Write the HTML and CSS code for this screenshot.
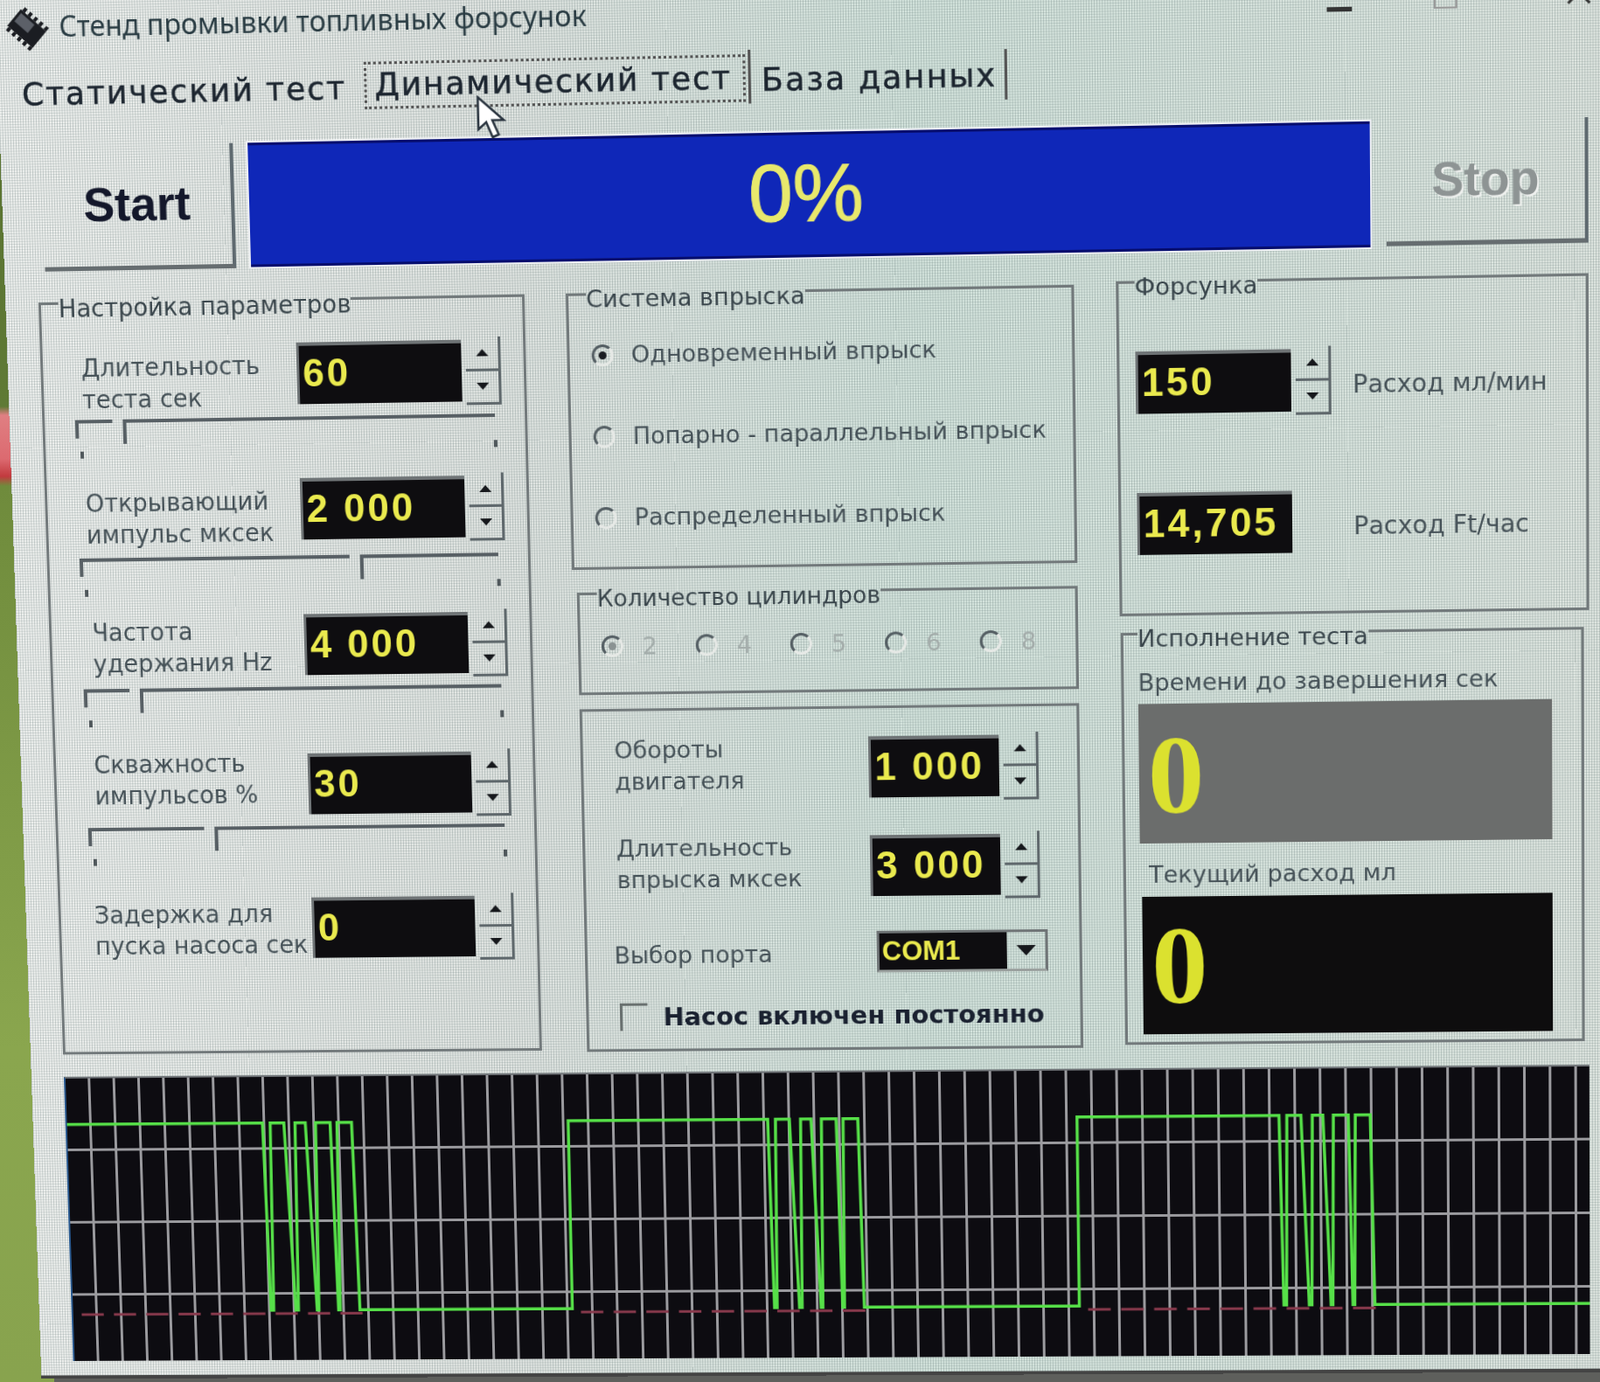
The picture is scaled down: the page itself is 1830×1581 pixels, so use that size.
FILE: index.html
```html
<!DOCTYPE html>
<html lang="ru">
<head>
  <meta charset="UTF-8" />
  <title>Стенд промывки топливных форсунок</title>
  <link rel="stylesheet" href="styles.css">
</head>
<body>

<div class="window">

  <div class="titlebar">
    <svg class="chip" width="54" height="54" viewBox="0 0 54 54">
      <g transform="rotate(42 27 27)">
        <rect x="8" y="15" width="38" height="24" fill="#1b1d22"/>
        <rect x="11" y="18" width="20" height="12" fill="#5c6068"/>
        <path d="M12 15V10M20 15V10M28 15V10M36 15V10M44 15V10M12 39v5M20 39v5M28 39v5M36 39v5M44 39v5" stroke="#1b1d22" stroke-width="4"/>
      </g>
    </svg>
    <span class="title-text">Стенд промывки топливных форсунок</span>
    <div class="win-btns">
      <span class="win-min"></span>
      <span class="win-max"></span>
      <svg class="win-close" width="30" height="30" viewBox="0 0 30 30"><path d="M3 3L27 27M27 3L3 27" stroke="#333" stroke-width="3"/></svg>
    </div>
  </div>

  <div class="tabs">
    <div class="tab tab-first">Статический тест</div>
    <div class="tab tab-active"><span class="tab-focus">Динамический тест</span></div>
    <div class="tab tab-last">База данных</div>
  </div>

  <div class="toolbar">
    <div class="btn btn-start">Start</div>
    <div class="progress">0%</div>
    <div class="btn btn-stop">Stop</div>
  </div>

  <div class="panels">

    <fieldset class="group group-params">
      <legend>Настройка параметров</legend>
      <div class="params">
        <div class="param">
          <div class="param-row">
            <div class="label label-param">Длительность<br>теста сек</div>
            <div class="lcd lcd-param">60</div>
            <div class="spin"><div class="spin-up"><i class="arrow-up"></i></div><div class="spin-down"><i class="arrow-down"></i></div></div>
          </div>
          <div class="slider slider-high"><span class="track-left" style="width: 9%"></span><span class="track-right"></span><i class="tick-l"></i><i class="tick-r"></i></div>
        </div>
        <div class="param">
          <div class="param-row">
            <div class="label label-param">Открывающий<br>импульс мксек</div>
            <div class="lcd lcd-param">2 000</div>
            <div class="spin"><div class="spin-up"><i class="arrow-up"></i></div><div class="spin-down"><i class="arrow-down"></i></div></div>
          </div>
          <div class="slider"><span class="track-left" style="width: 64.6%"></span><span class="track-right"></span><i class="tick-l"></i><i class="tick-r"></i></div>
        </div>
        <div class="param">
          <div class="param-row">
            <div class="label label-param label-freq">Частота<br>удержания Hz</div>
            <div class="lcd lcd-param">4 000</div>
            <div class="spin"><div class="spin-up"><i class="arrow-up"></i></div><div class="spin-down"><i class="arrow-down"></i></div></div>
          </div>
          <div class="slider"><span class="track-left" style="width: 11%"></span><span class="track-right"></span><i class="tick-l"></i><i class="tick-r"></i></div>
        </div>
        <div class="param">
          <div class="param-row">
            <div class="label label-param label-duty">Скважность<br>импульсов %</div>
            <div class="lcd lcd-param">30</div>
            <div class="spin"><div class="spin-up"><i class="arrow-up"></i></div><div class="spin-down"><i class="arrow-down"></i></div></div>
          </div>
          <div class="slider"><span class="track-left" style="width: 28%"></span><span class="track-right"></span><i class="tick-l"></i><i class="tick-r"></i></div>
        </div>
        <div class="param">
          <div class="param-row">
            <div class="label label-param label-delay">Задержка для<br>пуска насоса сек</div>
            <div class="lcd lcd-param">0</div>
            <div class="spin"><div class="spin-up"><i class="arrow-up"></i></div><div class="spin-down"><i class="arrow-down"></i></div></div>
          </div>
        </div>
      </div>
    </fieldset>

    <div class="column">
      <fieldset class="group group-system">
        <legend>Система впрыска</legend>
        <div class="radio-list">
          <div class="radio-row"><span class="radio radio-on"></span><span class="label">Одновременный впрыск</span></div>
          <div class="radio-row"><span class="radio"></span><span class="label">Попарно - параллельный впрыск</span></div>
          <div class="radio-row"><span class="radio"></span><span class="label">Распределенный впрыск</span></div>
        </div>
      </fieldset>

      <fieldset class="group group-cyl">
        <legend>Количество цилиндров</legend>
        <div class="cyl-row">
          <div class="cyl"><span class="radio radio-on"></span><span>2</span></div>
          <div class="cyl"><span class="radio"></span><span>4</span></div>
          <div class="cyl"><span class="radio"></span><span>5</span></div>
          <div class="cyl"><span class="radio"></span><span>6</span></div>
          <div class="cyl"><span class="radio"></span><span>8</span></div>
        </div>
      </fieldset>

      <fieldset class="group group-engine">
        <div class="engine-row">
          <div class="label label-engine">Обороты<br>двигателя</div>
          <div class="lcd lcd-engine">1 000</div>
          <div class="spin"><div class="spin-up"><i class="arrow-up"></i></div><div class="spin-down"><i class="arrow-down"></i></div></div>
        </div>
        <div class="engine-row engine-row-short">
          <div class="label label-engine">Длительность<br>впрыска мксек</div>
          <div class="lcd lcd-engine">3 000</div>
          <div class="spin"><div class="spin-up"><i class="arrow-up"></i></div><div class="spin-down"><i class="arrow-down"></i></div></div>
        </div>
        <div class="port-row">
          <div class="label label-port">Выбор порта</div>
          <div class="combo">
            <div class="combo-text">COM1</div>
            <div class="combo-btn"><i class="arrow-down arrow-big"></i></div>
          </div>
        </div>
        <div class="check-row">
          <span class="check"></span>
          <span class="check-text">Насос включен постоянно</span>
        </div>
      </fieldset>
    </div>

    <div class="column">
      <fieldset class="group group-injector">
        <legend>Форсунка</legend>
        <div class="injector">
          <div class="injector-row">
            <div class="lcd lcd-injector">150</div>
            <div class="spin"><div class="spin-up"><i class="arrow-up"></i></div><div class="spin-down"><i class="arrow-down"></i></div></div>
            <div class="label injector-label">Расход мл/мин</div>
          </div>
          <div class="injector-row injector-row-out">
            <div class="lcd lcd-injector">14,705</div>
            <div class="label injector-label injector-label-out">Расход Ft/час</div>
          </div>
        </div>
      </fieldset>

      <fieldset class="group group-run">
        <legend>Исполнение теста</legend>
        <div class="run">
          <div class="label">Времени до завершения сек</div>
          <div class="big big-gray">0</div>
          <div class="label run-label-low">Текущий расход мл</div>
          <div class="big big-black">0</div>
        </div>
      </fieldset>
    </div>

  </div>

  <div class="scope">
    <svg class="trace" viewBox="0 0 1756 334" preserveAspectRatio="none">
      <path class="dash" d="M10 279H340M595 279H925M1182 279H1512"/>
      <polyline class="wave" points="0,54 229,54 233,275 236,275 238,54 254,54 262,275 265,275 267,54 279,54 287,275 289,275 291,54 308,54 312,275 314,275 316,54 333,54 337,275 585,275 585,54 816,54 820,275 823,275 825,54 841,54 849,275 852,275 854,54 866,54 874,275 876,275 878,54 895,54 899,275 901,275 903,54 920,54 924,275 1172,275 1172,54 1403,54 1407,275 1410,275 1412,54 1428,54 1436,275 1439,275 1441,54 1453,54 1461,275 1463,275 1465,54 1482,54 1486,275 1488,275 1490,54 1507,54 1511,275 1756,275"/>
    </svg>
  </div>

  <svg class="cursor" width="38" height="50" viewBox="0 0 38 50">
    <path d="M2 2L2 38L11 30L18 47L25 44L18 28L31 28Z" fill="#fff" stroke="#2b3540" stroke-width="2.5"/>
  </svg>

</div>

</body>
</html>
```

FILE: styles.css
```css
html, body {
  margin: 0;
  height: 1581px;
  overflow: hidden;
}
body {
  background:
    linear-gradient(90deg, transparent 62px, #5e5f5c 62px) bottom / 100% 30px no-repeat,
    linear-gradient(180deg, #58702f 0, #5f7a35 465px, #e07f82 475px, #dc6a70 525px, #c23a3e 545px, #6f8b3c 556px, #8aa64e 1200px, #88a34e 100%);
  font-family: "DejaVu Sans", sans-serif;
  color: #3e4a50;
}
* {
  box-sizing: border-box;
}

/* the photo is taken at an angle, so the whole window is put in perspective */
.window {
  position: relative;
  width: 1900px;
  height: 1590px;
  transform-origin: 0 0;
  transform: matrix3d(0.99337, -0.020754, 0, -0.00001039, 0.03397, 1.01869, 0, 0.00001752, 0, 0, 1, 0, 38.5, 168, 0, 1) translate(-38.5px, -168px);
  background:
    repeating-linear-gradient(90deg, rgba(60, 85, 85, 0.2) 0 1px, transparent 1px 3px),
    repeating-linear-gradient(0deg, rgba(60, 85, 85, 0.14) 0 1px, transparent 1px 3px),
    linear-gradient(90deg, #eef0ee 0, #e1e5e2 30%, #d3e3dc 55%, #dbe5df 85%, #e0e5e0 100%);
  border-bottom: 4px solid #444;
}

.titlebar {
  height: 62px;
  padding: 4px 0 0 8px;
  display: flex;
  align-items: center;
}
.chip {
  flex: none;
  margin-top: 3px;
}
.title-text {
  margin-left: 10px;
  font-family: "Noto Sans", sans-serif;
  font-size: 32.2px;
  line-height: 36px;
  color: #2b3d44;
}
.win-btns {
  margin-left: auto;
  margin-right: 100px;
  display: flex;
  align-items: flex-end;
  height: 30px;
}
.win-min {
  width: 28px;
  height: 5px;
  margin-bottom: 2px;
  background: #333;
}
.win-max {
  width: 26px;
  height: 24px;
  margin-left: 91px;
  margin-bottom: 3px;
  border: 2px solid #999;
}
.win-close {
  margin-left: 120px;
  margin-bottom: 3px;
}

.tabs {
  height: 106px;
  display: flex;
  align-items: flex-start;
  font-size: 36px;
  color: #1d2630;
  letter-spacing: 2px;
  -webkit-text-stroke: 0.5px #1d2630;
}
.tab {
  line-height: 44px;
  white-space: nowrap;
}
.tab-first {
  margin: 25px 0 0 27px;
  width: 392px;
}
.tab-active {
  width: 439px;
  height: 60px;
  margin-top: 13px;
  border-right: 3px solid #555;
}
.tab-focus {
  display: block;
  width: 433px;
  height: 53px;
  margin-top: 5px;
  padding: 1px 0 0 9px;
  border: 3px dotted #555;
  letter-spacing: 1.8px;
}
.tab-last {
  margin: 18px 0 0 12px;
  padding: 7px 9px 0 0;
  height: 56px;
  border-right: 3px solid #555;
}

.toolbar {
  height: 156px;
  padding-left: 47px;
  display: flex;
  align-items: flex-start;
}
.btn {
  font-family: "Liberation Sans", sans-serif;
  font-weight: 700;
  font-size: 54px;
  display: flex;
  align-items: center;
  justify-content: center;
  border-right: 4px solid #5f6a70;
  border-bottom: 5px solid #666d70;
}
.btn-start {
  width: 220px;
  height: 141px;
  padding-bottom: 4px;
  color: #14182b;
}
.btn-stop {
  width: 225px;
  height: 139px;
  padding-bottom: 4px;
  margin-left: 18px;
  color: #8e9494;
  text-shadow: 2px 2px 0 #eef0ee;
}
.progress {
  width: 1268px;
  height: 140px;
  margin-left: 17px;
  background: #0f27b8;
  border-top: 3px solid #060d6e;
  border-bottom: 3px solid #060d6e;
  box-shadow: 0 0 0 2px #eef0f4;
  color: #e8e86c;
  -webkit-text-stroke: 1px #e8e86c;
  font-family: "Liberation Sans", sans-serif;
  font-size: 90px;
  padding-bottom: 3px;
  display: flex;
  align-items: center;
  justify-content: center;
}

.panels {
  display: flex;
  align-items: flex-start;
  gap: 50px;
  padding-left: 38px;
  margin-top: -3px;
}
.column {
  display: flex;
  flex-direction: column;
}
.group {
  margin: 0;
  padding: 0;
  min-width: 0;
  border: 3px solid #72797b;
}
/* the captions hang a little below the frame line, as in the old Windows font */
.group legend {
  margin-left: 18px;
  padding: 12px 0 0;
  font-size: 27px;
  line-height: 36px;
  color: #3a464c;
  white-space: nowrap;
}
.label {
  font-size: 27px;
  line-height: 36px;
  color: #465258;
  white-space: nowrap;
}

/* left column */
.group-params {
  width: 558px;
  height: 888px;
}
.group-params legend {
  margin-left: 20px;
  font-size: 27.5px;
}
.params {
  display: grid;
  grid-template-rows: 154px 155px 160px 166px auto;
  padding: 25px 0 0 44px;
}
.param-row {
  display: flex;
  align-items: flex-start;
}
.label-param {
  width: 248px;
  padding-top: 7px;
  font-size: 27.5px;
}
.label-freq {
  padding: 0 0 0 3px;
}
.label-duty {
  padding-top: 0;
  margin-top: -8px;
}
.label-delay {
  width: 253px;
  padding-top: 0;
  margin-left: -5px;
}
.lcd {
  flex: none;
  height: 70px;
  background: #0e0d10;
  border-top: 4px solid #6f7476;
  border-left: 3px solid #6f7476;
  color: #eaea4e;
  font-family: "Liberation Sans", sans-serif;
  font-weight: 700;
  font-size: 44px;
  letter-spacing: 3px;
  padding: 0 0 5px 4px;
  display: flex;
  align-items: center;
}
.lcd-param {
  width: 189px;
}
.spin {
  flex: none;
  width: 40px;
  height: 77px;
  margin: -3px 0 0 5px;
  display: flex;
  flex-direction: column;
  border-right: 3px solid #5f686c;
  border-bottom: 3px solid #5f686c;
}
.spin-up,
.spin-down {
  flex: 1;
  display: flex;
  align-items: center;
  justify-content: center;
}
.spin-up {
  border-bottom: 3px solid #5f686c;
}
.arrow-up,
.arrow-down {
  display: block;
  width: 0;
  height: 0;
  border-left: 7px solid transparent;
  border-right: 7px solid transparent;
}
.arrow-up {
  border-bottom: 8px solid #16181c;
}
.arrow-down {
  border-top: 8px solid #16181c;
}
.arrow-big {
  border-left-width: 11px;
  border-right-width: 11px;
  border-top-width: 12px;
}

.slider {
  position: relative;
  display: flex;
  align-items: flex-start;
  width: 483px;
  margin: 9px 0 0 -9px;
}
.slider-high {
  margin-top: 5px;
}
.track-left {
  height: 21px;
  border-top: 4px solid #586065;
  border-left: 4px solid #586065;
}
.track-right {
  flex: 1;
  height: 28px;
  margin-left: 12px;
  border-top: 4px solid #586065;
  border-left: 4px solid #586065;
}
.tick-l,
.tick-r {
  position: absolute;
  width: 4px;
  height: 8px;
  background: #50585c;
}
.tick-l {
  left: 5px;
  top: 36px;
}
.tick-r {
  right: -2px;
  top: 30px;
}

/* middle column */
.group-system {
  width: 576px;
  height: 336px;
  margin-left: -3px;
}
.group-system legend {
  margin-left: 20px;
}
.radio-list {
  display: flex;
  flex-direction: column;
  gap: 56px;
  padding: 27px 0 0 25px;
}
.radio-row {
  display: flex;
  align-items: center;
  gap: 20px;
  height: 36px;
}
.radio {
  position: relative;
  flex: none;
  width: 25px;
  height: 25px;
  border-radius: 50%;
  border: 3px solid #e6e9e6;
  border-top-color: #555f64;
  border-left-color: #555f64;
}
.radio-on::after {
  content: "";
  position: absolute;
  left: 5px;
  top: 5px;
  width: 9px;
  height: 9px;
  border-radius: 50%;
  background: #1a1d22;
}
.group-cyl {
  width: 571px;
  height: 140px;
  margin: 3px 0 0 2px;
}
.group-cyl legend {
  margin-left: 20px;
  font-size: 26.4px;
}
.cyl-row {
  display: flex;
  padding: 22px 0 0 24px;
}
.cyl {
  display: flex;
  align-items: center;
  gap: 22px;
  width: 108px;
  height: 28px;
  font-size: 27px;
  color: #a4adab;
}
.cyl .radio-on::after {
  background: #8a9292;
}
.group-engine {
  width: 571px;
  height: 395px;
  margin: 16px 0 0 2px;
  padding: 32px 0 0 36px;
}
.engine-row {
  display: flex;
  align-items: flex-start;
  height: 113px;
}
.engine-row-short {
  height: 111px;
}
.label-engine {
  width: 291px;
  margin-top: -5px;
}
.lcd-engine {
  width: 149px;
}
.port-row {
  display: flex;
  align-items: center;
  height: 46px;
}
.label-port {
  width: 302px;
  margin: 4px 0 0 -5px;
}
.combo {
  display: flex;
  width: 196px;
  height: 48px;
  border: 3px solid #6f7476;
  border-bottom-color: #9aa09e;
}
.combo-text {
  flex: 1;
  background: #0e0d10;
  color: #eaea4e;
  font-family: "Liberation Sans", sans-serif;
  font-weight: 700;
  font-size: 31px;
  padding-left: 3px;
  line-height: 41px;
}
.combo-btn {
  width: 44px;
  display: flex;
  align-items: center;
  justify-content: center;
}
.check-row {
  display: flex;
  align-items: center;
  margin-top: 33px;
}
.check {
  flex: none;
  width: 32px;
  height: 32px;
  border-top: 3px solid #69706f;
  border-left: 3px solid #69706f;
}
.check-text {
  margin-left: 18px;
  font-size: 29px;
  font-weight: 700;
  color: #1a2130;
  white-space: nowrap;
}

/* right column */
.group-injector {
  width: 529px;
  height: 400px;
  margin: -3px 0 0 -3px;
}
.injector {
  padding: 54px 0 0 18px;
}
.injector-row {
  display: flex;
  align-items: flex-start;
}
.injector-row-out {
  margin-top: 85px;
}
.lcd-injector {
  width: 175px;
}
.injector-label {
  margin: 23px 0 0 24px;
  font-size: 28px;
}
.injector-label-out {
  margin-left: 69px;
}
.group-run {
  width: 522px;
  height: 494px;
  margin: -4px 0 0 -2px;
}
.group-run legend {
  margin-left: 16px;
}
.run {
  padding: 14px 0 0 16px;
}
.run-label-low {
  margin: 18px 0 7px 10px;
}
.big {
  display: flex;
  align-items: center;
  width: 467px;
  color: #dbe12f;
  font-family: "Liberation Serif", serif;
  font-weight: 700;
  font-size: 128px;
  padding: 0 0 0 10px;
}
.big-gray {
  height: 159px;
  margin-top: 6px;
  padding-top: 3px;
  background: #6b6d6c;
}
.big-black {
  height: 158px;
  margin-left: 2px;
  width: 465px;
  background: #0e0d0e;
}

.scope {
  width: 1756px;
  height: 334px;
  margin: 24px 0 0 38px;
  background-color: #0d0c11;
  background-image:
    repeating-linear-gradient(90deg, transparent 0 26px, #9b9b9f 26px 29px),
    repeating-linear-gradient(180deg, transparent 0 82px, #9b9b9f 82px 85px);
  border-left: 2px solid #2a5a90;
  border-top: 2px solid #707478;
}
.trace {
  display: block;
  width: 100%;
  height: 100%;
}
.wave {
  fill: none;
  stroke: #56e048;
  stroke-width: 3.5;
}
.dash {
  fill: none;
  stroke: #8a3a4d;
  stroke-width: 3;
  stroke-dasharray: 26 12;
}

.cursor {
  position: absolute;
  left: 546px;
  top: 120px;
}
```
